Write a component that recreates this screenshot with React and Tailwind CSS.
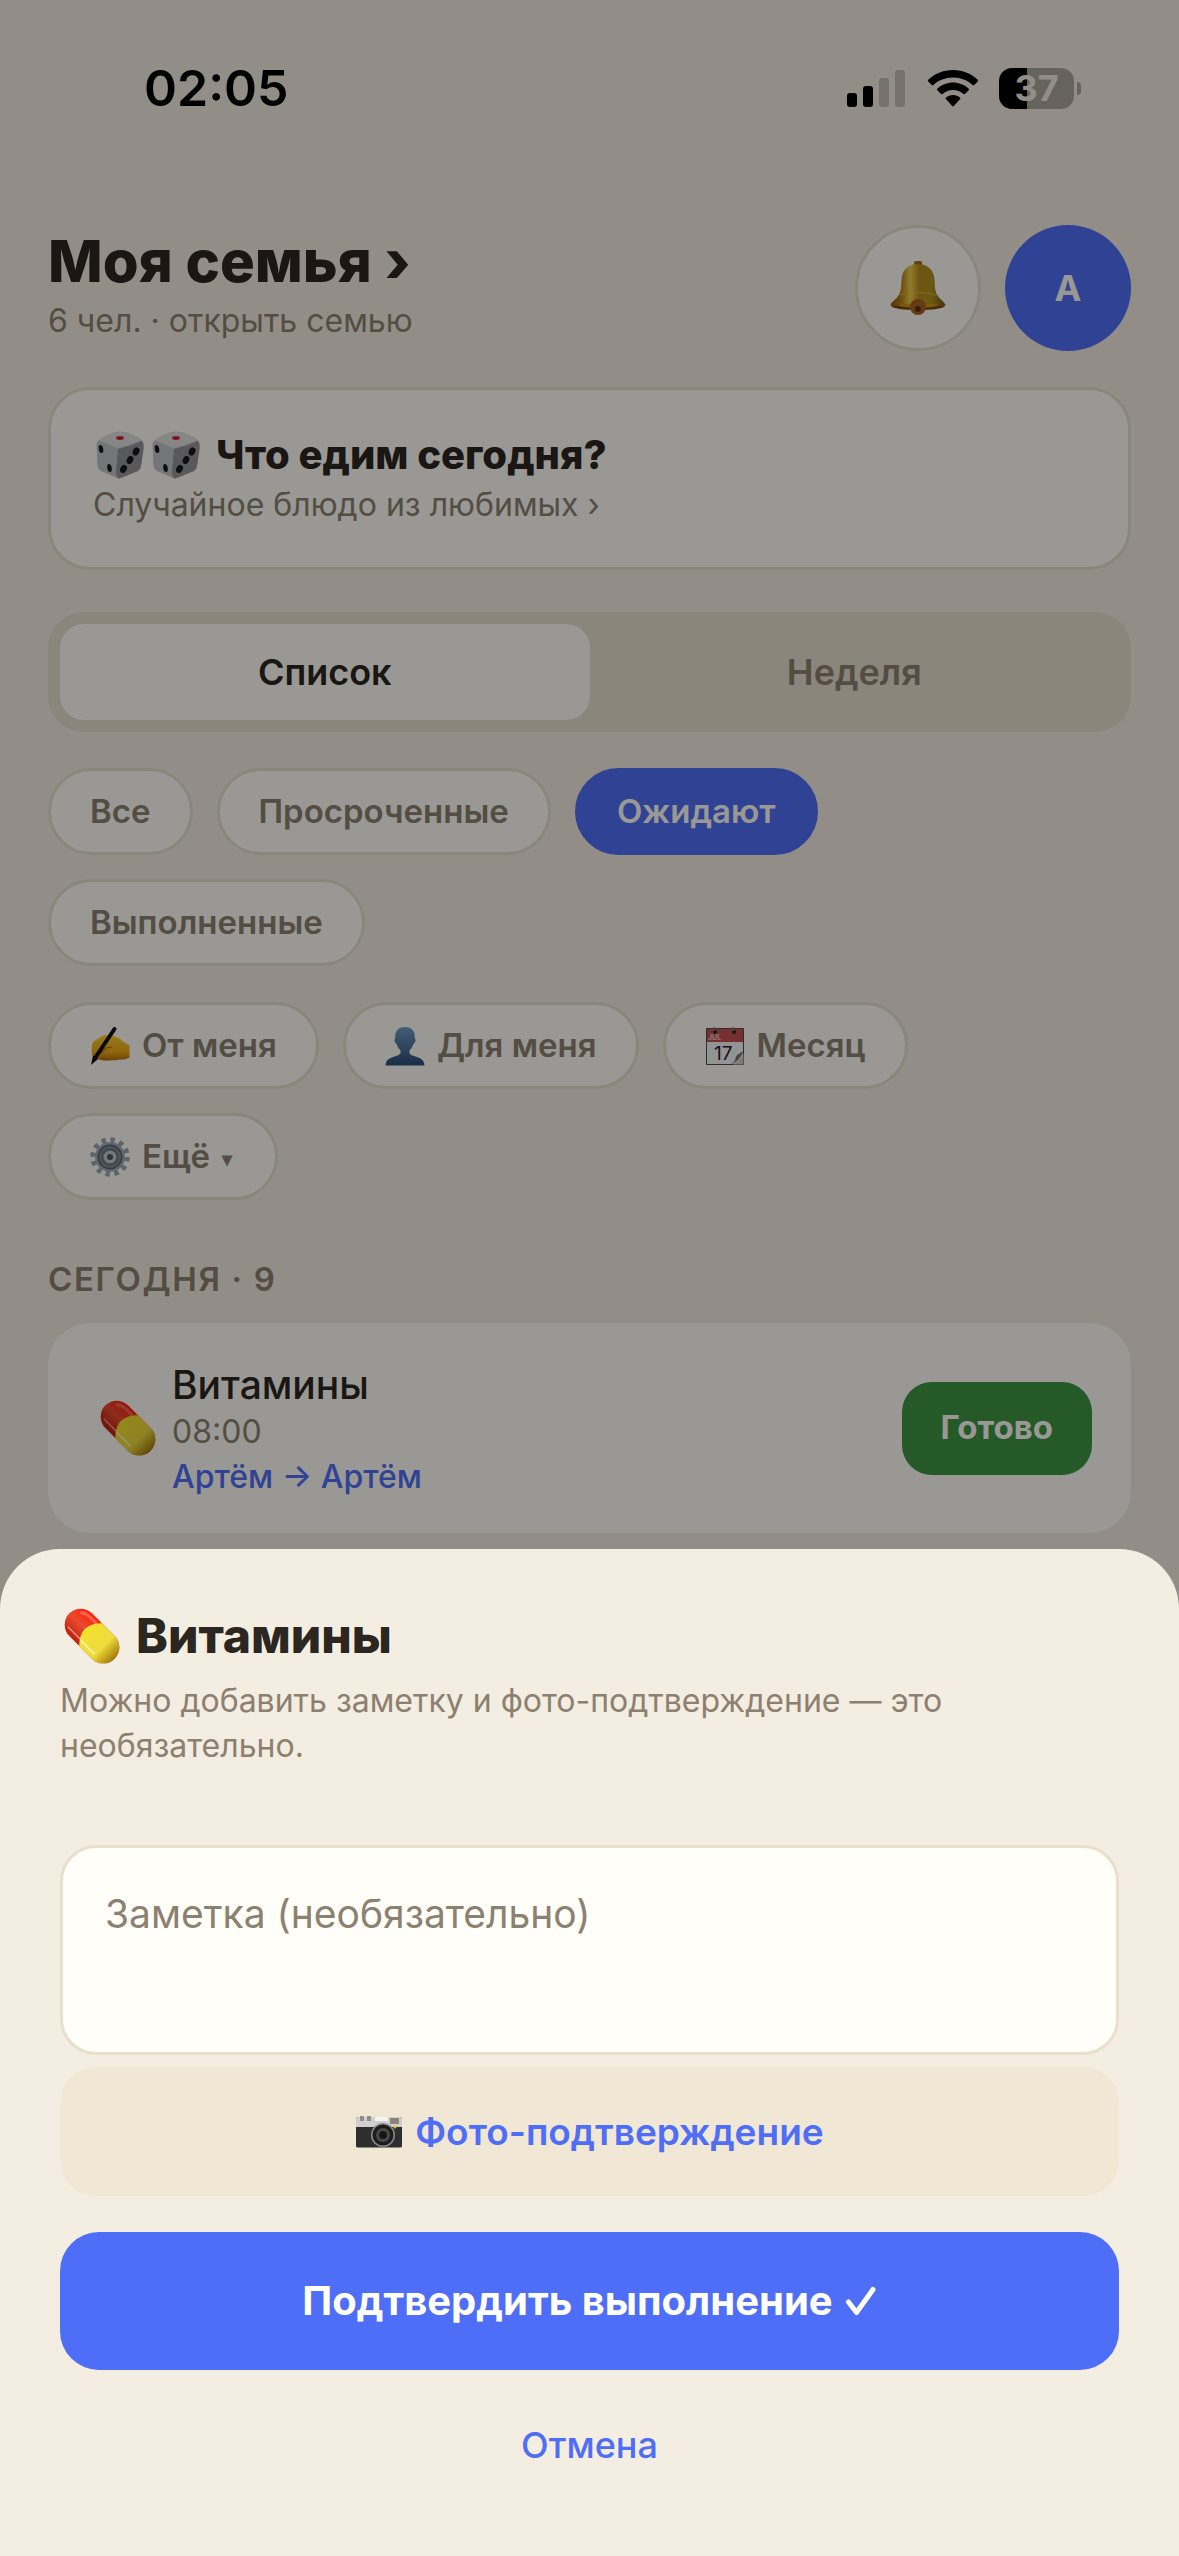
import React from "react";

const chip = "flex h-[87px] items-center gap-3 rounded-full border-3 px-[39px] text-[33px] font-semibold";
const idle = "border-[#e8dfcd] bg-[#fffef8] text-[#8c8070]";
const active = "border-[#4f6ef7] bg-[#4f6ef7] text-[#fffef8]";

function Chip({ on, icon, children }) {
  return (
    <button type="button" aria-pressed={!!on} className={`${chip} ${on ? active : idle}`}>
      {icon}
      <span>{children}</span>
    </button>
  );
}

function Signal() {
  return (
    <svg className="h-[38px] w-[60px]" viewBox="0 0 60 38" aria-hidden="true">
      <rect x="0" y="24" width="10" height="14" rx="3" />
      <rect x="16" y="17" width="10" height="21" rx="3" />
      <rect x="32" y="9" width="10" height="29" rx="3" fillOpacity=".2" />
      <rect x="48" y="1" width="10" height="37" rx="3" fillOpacity=".2" />
    </svg>
  );
}

function Wifi() {
  return (
    <svg className="h-[38px] w-[52px]" viewBox="0 0 52 38" aria-hidden="true">
      <path d="M26 1C16 1 7.500 4.800 1.200 10.800q-.8.800 0 1.600l3.600 3.600q.8.800 1.600 0C11.500 11.300 18.300 8.500 26 8.500s14.500 2.800 19.600 7.500q.8.800 1.600 0l3.600-3.600q.8-.8 0-1.600C44.500 4.800 36 1 26 1z" />
      <path d="M26 13.500c-6 0-11.500 2.300-15.700 6.200q-.8.800 0 1.600l3.800 3.700q.8.700 1.600 0c2.800-2.500 6.300-4 10.300-4s7.500 1.500 10.300 4q.8.700 1.600 0l3.800-3.700q.8-.8 0-1.600C37.500 15.800 32 13.500 26 13.500z" />
      <path d="M26 26c-2.700 0-5.100.9-7 2.500q-.9.800-.1 1.600l6.300 7q.8.800 1.600 0l6.300-7q.8-.8-.1-1.600C31.100 26.900 28.700 26 26 26z" />
    </svg>
  );
}

function Battery() {
  return (
    <div className="flex items-center gap-[3px]" role="img" aria-label="37%">
      <div className="flex h-[41px] w-[75px] items-center justify-center rounded-[13px] bg-linear-to-r from-black from-37% to-black/30 to-37%">
        <span className="text-[36px] leading-none font-bold text-[#f4ede1]">37</span>
      </div>
      <div className="h-[13px] w-[4px] rounded-r-full bg-black/30" />
    </div>
  );
}

function Bell() {
  return (
    <svg className="h-[54px] w-[56px]" viewBox="0 0 56 54" aria-hidden="true">
      <defs>
        <linearGradient id="bell" x1="0" x2="1">
          <stop offset="0" stopColor="#8f5a0c" />
          <stop offset=".2" stopColor="#b9821c" />
          <stop offset=".36" stopColor="#efd04a" />
          <stop offset=".52" stopColor="#b98c22" />
          <stop offset=".75" stopColor="#b0941e" />
          <stop offset="1" stopColor="#7a5210" />
        </linearGradient>
      </defs>
      <rect x="24" y="0" width="8" height="6" rx="2" fill="#9a701c" />
      <ellipse cx="28" cy="45.500" rx="26" ry="3.500" fill="#7c430e" />
      <path d="M28 3C17 3 12 10 11.500 19c-.4 8-.5 12-3.500 16-2.500 4-7 6-7.500 9.500C.3 47 14 42.500 28 42.500S55.700 47 55.500 44.500C55 41 50.500 39 48 35c-3-4-3.100-8-3.500-16C44 10 39 3 28 3z" fill="url(#bell)" />
      <path d="M9 34q19-5 38 0" fill="none" stroke="#e8c84a" strokeWidth="1.500" opacity=".5" />
      <ellipse cx="28" cy="44.500" rx="20" ry="2" fill="#c9961c" />
      <circle cx="28" cy="46" r="8" fill="#a9651f" />
      <circle cx="28" cy="48" r="3" fill="#5c3110" />
    </svg>
  );
}

function Die() {
  return (
    <svg className="h-12 w-12" viewBox="0 0 48 48" aria-hidden="true">
      <path d="M3 9Q13 2 24 .5 37 2 46 9q2 3 1.500 8L45 35q-.5 3-3 5L25 47q-2 .8-4 0L5 40q-3-2-3.500-5L.5 15q0-4 2.500-6z" fill="#c4c5c7" />
      <path d="M3 9Q13 2 24 .5 37 2 46 9 35 14 22 17 10 13 3 9z" fill="#dfe0e2" />
      <path d="M22 18q12-3 24-8 2 3 1.500 8L45 35q-.5 3-3 5L23 47.500q-3-1-3-6z" fill="#94959a" />
      <ellipse cx="24" cy="7" rx="4" ry="1.900" fill="#d6202b" />
      <g fill="#17181c">
        <ellipse cx="5" cy="18" rx="2.200" ry="4" transform="rotate(-12 5 18)" />
        <ellipse cx="13.500" cy="37" rx="2.200" ry="4" transform="rotate(-12 13.500 37)" />
        <ellipse cx="40" cy="20.500" rx="3.200" ry="4.200" transform="rotate(25 40 20.500)" />
        <ellipse cx="34" cy="29" rx="3.200" ry="4.200" transform="rotate(25 34 29)" />
        <ellipse cx="27.500" cy="38" rx="3.200" ry="4.200" transform="rotate(25 27.500 38)" />
      </g>
    </svg>
  );
}

function Pill() {
  return (
    <svg className="size-14 shrink-0" viewBox="0 0 56 56" aria-hidden="true">
      <defs>
        <linearGradient id="pillRed" x1="0" x2="0" y1="0" y2="1">
          <stop offset="0" stopColor="#ff2408" />
          <stop offset=".5" stopColor="#ea4a32" />
          <stop offset="1" stopColor="#c01f0c" />
        </linearGradient>
        <linearGradient id="pillYellow" x1="0" x2="1" y1="0" y2="0">
          <stop offset="0" stopColor="#f4e12c" />
          <stop offset=".6" stopColor="#eedc3e" />
          <stop offset="1" stopColor="#a37c08" />
        </linearGradient>
      </defs>
      <g transform="rotate(45 28 28)">
        <rect x="-4" y="12" width="64" height="32" rx="16" fill="url(#pillRed)" />
        <path d="M26 12h18a16 16 0 0 1 0 32H26q-16-16 0-32z" fill="url(#pillYellow)" />
        <path d="M5 38.500h17" fill="none" stroke="#fff" strokeWidth="1.500" strokeLinecap="round" opacity=".5" />
        <path d="M23 39h19" fill="none" stroke="#fffde0" strokeWidth="1.500" strokeLinecap="round" opacity=".8" />
        <path d="M4 19q4-3 9-3h8" fill="none" stroke="#fff" strokeWidth="3" strokeLinecap="round" opacity=".25" />
      </g>
    </svg>
  );
}

function Writing() {
  return (
    <svg className="size-10" viewBox="0 0 40 40" aria-hidden="true">
      <defs>
        <linearGradient id="hand" x1="0" x2="0" y1="0" y2="1">
          <stop offset="0" stopColor="#ffcf33" />
          <stop offset=".65" stopColor="#f0aa14" />
          <stop offset="1" stopColor="#b3700a" />
        </linearGradient>
      </defs>
      <path d="M2 19q0-3 4-5l6-4q4-1.500 10-.5 7 1.500 11 6l6.500 4v12q-4 2.500-8 2-7 1-13 1-5 .5-10-1-4-.5-6-3-1.500-5-.5-11.500z" fill="url(#hand)" />
      <path d="M9 29l7-7 6-1M12 33q1-2 3-1M17 34q1-2 3-1" fill="none" stroke="#a8690a" strokeWidth="1.200" />
      <path d="M24.500 3L5 32" fill="none" stroke="#111" strokeWidth="4" strokeLinecap="round" />
      <path d="M3 30l5 3-7 6z" fill="#111" />
    </svg>
  );
}

function Person() {
  return (
    <svg className="size-10" viewBox="0 0 40 40" aria-hidden="true">
      <defs>
        <linearGradient id="bust" x1="0" x2="0" y1="0" y2="1">
          <stop offset="0" stopColor="#6e9cc4" />
          <stop offset="1" stopColor="#2c4d73" />
        </linearGradient>
      </defs>
      <path d="M20 1c-7 0-10 4.500-9.700 10 .2 1.500-1.300 2-.8 4 .5 2.300 2 2.500 2.500 4 .8 2.500 2.500 4 3.500 5.500.5 3-.5 4.500-4.500 5.500C5 32 1 33 .5 39.500h39C39 33 35 32 29 30c-4-1-5-2.500-4.500-5.500 1-1.500 2.700-3 3.500-5.500.5-1.500 2-1.700 2.500-4 .5-2-1-2.500-.8-4C30 5.500 27 1 20 1z" fill="url(#bust)" />
    </svg>
  );
}

function Calendar() {
  return (
    <svg className="size-10" viewBox="0 0 40 40" aria-hidden="true">
      <path d="M1.500 2.500h37v36h-37z" fill="#f5f5f5" stroke="#4a4a4a" />
      <path d="M2 3h36v13H2z" fill="#c5504f" />
      <text x="3" y="14" fontSize="7" fontWeight="700" fill="#f3c8c8">JUL</text>
      <text x="9" y="34" fontSize="19" fontWeight="400" fill="#222">17</text>
      <path d="M38.500 25q-8 4-8 7 0 4-6 6.500 10-2 14-13.500z" fill="#777" />
      <path d="M38.500 28q-4 8-11 10.500h11z" fill="#cfcfcf" />
      <circle cx="10" cy="6" r="2" fill="#222" />
      <circle cx="29" cy="6" r="2" fill="#222" />
      <path d="M9 1v4M28 1v4" stroke="#888" strokeWidth="1.500" />
    </svg>
  );
}

function Gear() {
  return (
    <svg className="size-10" viewBox="0 0 40 40" aria-hidden="true">
      <circle cx="20" cy="20" r="17" fill="none" stroke="#9aa5b6" strokeWidth="5.500" strokeDasharray="4.300 4.600" />
      <circle cx="20" cy="20" r="15" fill="#a3adbb" />
      <circle cx="20" cy="20" r="12.500" fill="#59626c" />
      <circle cx="20" cy="20" r="11" fill="#818a94" />
      <circle cx="20" cy="20" r="8.500" fill="#6b747e" />
      <circle cx="20" cy="20" r="6.500" fill="#c3cad4" />
      <circle cx="20" cy="20" r="3" fill="#4e555e" />
    </svg>
  );
}

function Camera() {
  return (
    <svg className="h-8 w-12" viewBox="0 0 48 32" aria-hidden="true">
      <path d="M1 3Q1 1 3 1h42q2 0 2 2v27q0 1.500-2 1.500H3q-2 0-2-1.500z" fill="#2e2e2e" />
      <path d="M1 3Q1 1 3 1h42q2 0 2 2v8H1z" fill="#cfcfcd" />
      <path d="M5 0h4v5H5zM12 0h4v5h-4z" fill="#8f8f8d" />
      <path d="M20 1h13v4H20z" fill="#f5f5f2" />
      <path d="M35 2h9v6h-9z" fill="#8a8578" />
      <circle cx="28" cy="19" r="12" fill="#8b8b8b" />
      <circle cx="28" cy="19" r="10.500" fill="#1c1c1c" />
      <circle cx="28" cy="19" r="7" fill="#4a4a4a" />
      <circle cx="28" cy="19" r="4" fill="#161616" />
      <circle cx="40" cy="11" r="1.500" fill="#f0b429" />
    </svg>
  );
}

function Check() {
  return (
    <svg className="h-[30px] w-[32px]" viewBox="0 0 32 30" aria-hidden="true">
      <path d="M3.500 16l8 10.500L28 3.500" fill="none" stroke="currentColor" strokeWidth="5" strokeLinecap="round" strokeLinejoin="round" />
    </svg>
  );
}

export default function App() {
  return (
    <div className="relative flex min-h-screen flex-col bg-[#f4ede1] font-['Inter','Noto_Sans',sans-serif] text-[#2b2620]">
      <div className="flex h-44 items-center justify-between pr-[98px] pl-36 text-black">
        <span className="text-[50px] font-semibold">02:05</span>
        <div className="flex items-center gap-5">
          <Signal />
          <Wifi />
          <Battery />
        </div>
      </div>

      <main className="flex flex-col px-12 pt-[49px]">
        <header className="flex items-center justify-between">
          <div className="pb-1.5">
            <h1 className="text-[58px] leading-[72px] font-extrabold">
              <a href="#family">Моя семья ›</a>
            </h1>
            <p className="text-[32px] leading-[48px] text-[#8c8070]">6 чел. · открыть семью</p>
          </div>
          <div className="flex gap-6">
            <button type="button" aria-label="Уведомления" className="flex size-[126px] items-center justify-center rounded-full border-3 border-[#e8dfcd] bg-[#fffef8]">
              <Bell />
            </button>
            <button type="button" className="size-[126px] rounded-full bg-[#4f6ef7] text-[36px] font-bold text-[#fffef8]">A</button>
          </div>
        </header>

        <button type="button" className="mt-9 flex h-[183px] flex-col justify-center rounded-[42px] border-3 border-[#e8dfcd] bg-[#fffef8] px-[42px] text-left">
          <span className="flex items-center gap-2 pl-[3px] text-[40px] leading-[52px] font-extrabold">
            <Die />
            <Die />
            <span className="pl-2">Что едим сегодня?</span>
          </span>
          <span className="text-[32px] leading-[48px] text-[#8c8070]">Случайное блюдо из любимых ›</span>
        </button>

        <div role="tablist" className="mt-[42px] flex h-[120px] rounded-[36px] bg-[#e8dfcd] p-3 text-[36px] font-semibold">
          <button type="button" role="tab" aria-selected="true" className="flex-1 rounded-[24px] bg-[#fffef8]">Список</button>
          <button type="button" role="tab" aria-selected="false" className="flex-1 rounded-[24px] text-[#8c8070]">Неделя</button>
        </div>

        <div className="mt-9 flex flex-wrap gap-6 pr-48">
          <Chip>Все</Chip>
          <Chip>Просроченные</Chip>
          <Chip on>Ожидают</Chip>
          <Chip>Выполненные</Chip>
        </div>
        <div className="mt-9 flex flex-wrap gap-6 pr-48">
          <Chip icon={<Writing />}>От меня</Chip>
          <Chip icon={<Person />}>Для меня</Chip>
          <Chip icon={<Calendar />}>Месяц</Chip>
          <Chip icon={<Gear />}>
            Ещё <span className="px-1 align-middle text-[20px]">▾</span>
          </Chip>
        </div>

        <h2 className="mt-[57px] text-[33px] leading-[45px] font-semibold tracking-wider text-[#8c8070]">СЕГОДНЯ · 9</h2>
        <article className="mt-[21px] flex h-[210px] items-center gap-4 rounded-[42px] bg-[#fffef8] pr-[39px] pl-[52px]">
          <Pill />
          <div className="flex-1 pt-1">
            <h3 className="text-[39px] leading-[48px] font-medium">Витамины</h3>
            <p className="text-[32px] leading-[45px] text-[#8c8070]">08:00</p>
            <p className="text-[32px] leading-[45px] font-medium text-[#4f6ef7]">Артём → Артём</p>
          </div>
          <button type="button" className="h-[93px] rounded-[30px] bg-[#3f9442] px-[39px] text-[33px] font-bold text-[#fffef8]">Готово</button>
        </article>
      </main>

      <div className="absolute inset-0 flex flex-col justify-end bg-black/40">
        <section role="dialog" aria-modal="true" aria-labelledby="sheet-title" className="flex flex-col rounded-t-[60px] bg-[#f4ede1] px-[60px] pt-[57px] pb-[51px]">
          <h2 id="sheet-title" className="flex items-center gap-4 px-1 text-[48px] leading-[60px] font-extrabold">
            <Pill />
            Витамины
          </h2>
          <p className="mt-3 text-[32px] leading-[45px] text-[#8c8070]">
            Можно добавить заметку и фото-подтверждение — это необязательно.
          </p>
          <textarea aria-label="Заметка" placeholder="Заметка (необязательно)" className="mt-[77px] h-[210px] resize-none rounded-[36px] border-3 border-[#e8dfcd] bg-[#fffef8] px-[42px] py-[42px] text-[39px] leading-[48px] placeholder:text-[#8c8070]" />
          <button type="button" className="mt-3 flex h-[129px] items-center justify-center gap-3 rounded-[36px] bg-[#f0e7d5] text-[37px] font-semibold text-[#4f6ef7]">
            <Camera />
            Фото-подтверждение
          </button>
          <button type="button" className="mt-9 flex h-[138px] items-center justify-center gap-3 rounded-[39px] bg-[#4f6ef7] text-[40px] font-bold text-white">
            Подтвердить выполнение
            <Check />
          </button>
          <button type="button" className="mt-[15px] h-[120px] text-[36px] font-medium text-[#4f6ef7]">Отмена</button>
        </section>
      </div>
    </div>
  );
}
